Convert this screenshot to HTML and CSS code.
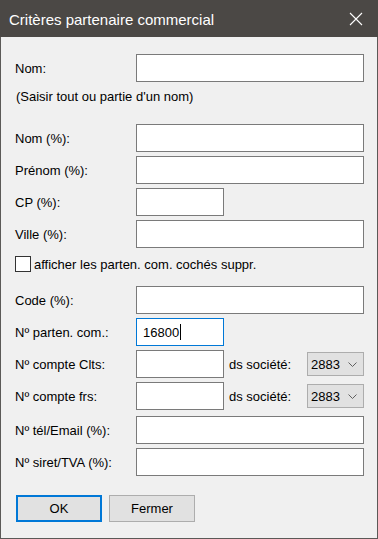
FILE: index.html
```html
<!DOCTYPE html>
<html lang="fr">
<head>
  <meta charset="UTF-8">
  <title>Critères partenaire commercial</title>
  <link rel="stylesheet" href="styles.css">
</head>
<body>

  <div class="window">

    <!-- Title bar -->
    <div class="titlebar">
      <span class="title">Critères partenaire commercial</span>
      <svg class="close" width="14" height="14" viewBox="0 0 14 14">
        <path d="M1 1 L13 13 M13 1 L1 13" stroke="#ffffff" stroke-width="1.1" fill="none"/>
      </svg>
    </div>

    <div class="content">
      <div class="row">
        <span class="label">Nom:</span>
        <div class="field"></div>
      </div>
      <p class="hint">(Saisir tout ou partie d'un nom)</p>

      <div class="group group-names">
        <div class="row">
          <span class="label">Nom (%):</span>
          <div class="field"></div>
        </div>
        <div class="row">
          <span class="label">Prénom (%):</span>
          <div class="field"></div>
        </div>
        <div class="row">
          <span class="label">CP (%):</span>
          <div class="field short"></div>
        </div>
        <div class="row">
          <span class="label">Ville (%):</span>
          <div class="field"></div>
        </div>
      </div>

      <div class="check">
        <span class="box"></span>
        <span>afficher les parten. com. cochés suppr.</span>
      </div>

      <div class="group group-codes">
        <div class="row">
          <span class="label">Code (%):</span>
          <div class="field"></div>
        </div>
        <div class="row">
          <span class="label">Nº parten. com.:</span>
          <div class="field short focused">16800<span class="caret"></span></div>
        </div>
        <div class="row">
          <span class="label">Nº compte Clts:</span>
          <div class="field short"></div>
          <span class="sublabel">ds société:</span>
          <div class="select">2883
            <svg class="chevron" width="9" height="5" viewBox="0 0 9 5">
              <path d="M0.5 0.5 L4.5 4.5 L8.5 0.5" stroke="#606060" fill="none"/>
            </svg>
          </div>
        </div>
        <div class="row">
          <span class="label">Nº compte frs:</span>
          <div class="field short"></div>
          <span class="sublabel">ds société:</span>
          <div class="select">2883
            <svg class="chevron" width="9" height="5" viewBox="0 0 9 5">
              <path d="M0.5 0.5 L4.5 4.5 L8.5 0.5" stroke="#606060" fill="none"/>
            </svg>
          </div>
        </div>
        <div class="row row-gap">
          <span class="label">Nº tél/Email (%):</span>
          <div class="field"></div>
        </div>
        <div class="row">
          <span class="label">Nº siret/TVA (%):</span>
          <div class="field"></div>
        </div>
      </div>

      <div class="buttons">
        <button class="btn default">OK</button>
        <button class="btn">Fermer</button>
      </div>
    </div>
  </div>

</body>
</html>
```

FILE: styles.css
```css
html, body {
  margin: 0;
  padding: 0;
  background-color: #f0f0f0;
  font-family: "Liberation Sans", Arial, sans-serif;
  font-size: 13px;
  color: #000000;
}

.window {
  width: 378px;
  height: 539px;
  box-sizing: border-box;
  border: 1px solid #5b5957;
  border-top: none;
  background-color: #f0f0f0;
  display: flex;
  flex-direction: column;
}

/* Title bar */
.titlebar {
  height: 37px;
  margin: 0 -1px;
  background-color: #4b4845;
  display: flex;
  align-items: center;
  justify-content: space-between;
  padding: 1px 15px 0 9px;
  box-sizing: border-box;
}

.title {
  font-size: 15px;
  color: #ffffff;
}

.close {
  margin-top: -1px;
}

.content {
  padding: 17px 13px 0 14px;
  display: flex;
  flex-direction: column;
}

.row {
  display: flex;
  align-items: center;
  height: 28px;
  line-height: 15px;
}

.label {
  width: 121px;
  flex-shrink: 0;
}

.field {
  flex: 1;
  height: 28px;
  box-sizing: border-box;
  border: 1px solid #7a7a7a;
  background-color: #ffffff;
  padding: 0 6px;
  display: flex;
  align-items: center;
}

.field.short {
  flex: 0 0 88px;
}

.field.focused {
  border-color: #0078d7;
}

.caret {
  width: 1px;
  height: 16px;
  background-color: #000000;
  margin-left: 1px;
}

.hint {
  margin: 7px 0 0 1px;
  line-height: 15px;
}

.group {
  display: flex;
  flex-direction: column;
  gap: 4px;
}

.group-names {
  margin-top: 20px;
}

.group-codes {
  margin-top: 14px;
}

.row-gap {
  margin-top: 2px;
}

.check {
  display: flex;
  align-items: center;
  gap: 3px;
  margin-top: 8px;
  height: 16px;
  line-height: 15px;
}

.box {
  width: 16px;
  height: 16px;
  box-sizing: border-box;
  border: 1px solid #333333;
  background-color: #ffffff;
}

.sublabel {
  margin-left: 5px;
}

.select {
  margin-left: auto;
  width: 57px;
  height: 24px;
  box-sizing: border-box;
  border: 1px solid #adadad;
  background-color: #e1e1e1;
  display: flex;
  align-items: center;
  justify-content: space-between;
  padding: 1px 6px 0 3px;
}

.chevron {
  margin-top: -1px;
}

.buttons {
  display: flex;
  gap: 7px;
  margin-top: 19px;
  padding-left: 1px;
}

.btn {
  width: 86px;
  height: 27px;
  box-sizing: border-box;
  border: 1px solid #adadad;
  background-color: #e1e1e1;
  font-family: "Liberation Sans", Arial, sans-serif;
  font-size: 13px;
  color: #000000;
  padding: 0;
}

.btn.default {
  border: 2px solid #0078d7;
}
```
